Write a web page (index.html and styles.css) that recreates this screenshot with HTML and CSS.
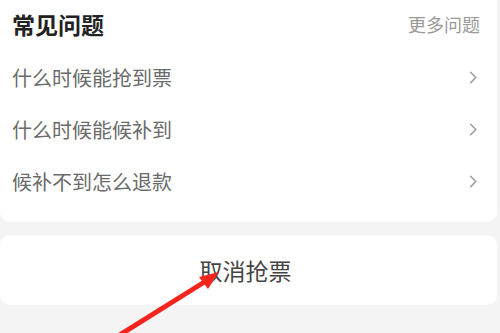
FILE: index.html
```html
<!doctype html>
<html>
    <head>
        <meta charset="UTF-8" />
        <meta name="viewport" content="width=device-width" />
        <title>常见问题</title>
        <link rel="stylesheet" href="styles.css">
    </head>
    <body>
        <div class="card">
            <div class="header">
                <span class="title">常见问题</span>
                <span class="more">更多问题</span>
            </div>
            <div class="row">
                <span class="question">什么时候能抢到票</span>
                <svg class="chevron" viewBox="0 0 10 16"><path d="M2 2 L8 8 L2 14" /></svg>
            </div>
            <div class="row">
                <span class="question">什么时候能候补到</span>
                <svg class="chevron" viewBox="0 0 10 16"><path d="M2 2 L8 8 L2 14" /></svg>
            </div>
            <div class="row">
                <span class="question">候补不到怎么退款</span>
                <svg class="chevron" viewBox="0 0 10 16"><path d="M2 2 L8 8 L2 14" /></svg>
            </div>
        </div>
        <div class="cancel">
            <span>取消抢票</span>
        </div>
        <svg class="arrow" viewBox="0 0 500 333">
            <line x1="118" y1="336" x2="206" y2="281" />
            <polygon points="219,272 199,277 208,289" />
        </svg>
    </body>
</html>
```

FILE: styles.css
```css
html,
body {
    background-color: #f4f4f4;
}
body {
    margin: 0;
    width: 500px;
    height: 333px;
    overflow: hidden;
    position: relative;
    font-family: "Noto Sans CJK SC", "Noto Sans", sans-serif;
}
.card {
    background-color: #fff;
    margin-right: 3px;
    border-radius: 0 0 10px 10px;
    padding-bottom: 15px;
}
.header {
    height: 47px;
    padding: 0 17px 4px 12px;
    display: flex;
    align-items: center;
    justify-content: space-between;
}
.title {
    font-size: 23px;
    font-weight: bold;
    color: #222;
}
.more {
    font-size: 18px;
    color: #999;
}
.row {
    height: 52px;
    padding: 0 19px 0 12px;
    display: flex;
    align-items: center;
    justify-content: space-between;
}
.question {
    font-size: 20px;
    color: #6a6a6a;
}
.chevron {
    width: 10px;
    height: 15px;
    fill: none;
    stroke: #a0a0a0;
    stroke-width: 1.6;
}
.cancel {
    background-color: #fff;
    margin: 13px 3px 0 0;
    height: 70px;
    border-radius: 10px;
    display: flex;
    align-items: center;
    justify-content: center;
}
.cancel span {
    font-size: 23px;
    color: #444;
    margin-left: -6px;
}
.arrow {
    position: absolute;
    top: 0;
    left: 0;
    width: 500px;
    height: 333px;
}
.arrow line {
    stroke: #f5241c;
    stroke-width: 5;
}
.arrow polygon {
    fill: #f5241c;
}
```
